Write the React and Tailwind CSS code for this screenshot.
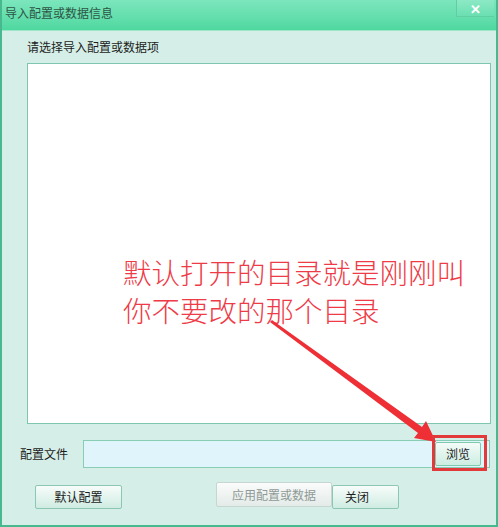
export default function App() {
  const font = { fontFamily: '"Noto Sans CJK SC", "Noto Sans", sans-serif' };
  return (
    <div
      className="relative w-[498px] h-[527px] overflow-hidden bg-[#d5efe8] border-l-2 border-r-2 border-b-2 border-[#48b88e] text-[12px] text-[#1d1d1d]"
      style={font}
    >
      {/* title bar */}
      <div className="flex h-[31px] items-start justify-between bg-gradient-to-b from-[#7ce6bd] to-[#4ed8a0] border-b border-[#9fe6c9]">
        <span className="pl-[3px] pt-[5px] leading-[16px] text-[#2e5546]">导入配置或数据信息</span>
        <div className="mr-[2px] flex h-[17px] w-[38px] items-center justify-center border-l border-b border-[#5fcfa2] bg-gradient-to-b from-[#8ce9c5] to-[#6adfb1] text-[13px] font-bold leading-none text-white">
          ✕
        </div>
      </div>

      <div className="flex flex-col px-[25px] pt-[8px]">
        <span className="leading-[16px]">请选择导入配置或数据项</span>
        <div className="mt-[8px] h-[361px] w-[464px] shrink-0 border border-[#7ec7ae] bg-white"></div>

        <div className="mt-[16px] -ml-[7px] flex items-center">
          <span className="w-[63px] shrink-0">配置文件</span>
          <div className="flex h-[28px] w-[407px] shrink-0 items-center justify-end border border-[#86cdb4] bg-[#e0f4fb] pr-[8px]">
            <button className="h-[24px] w-[46px] rounded-[2px] border border-[#7fcaae] bg-gradient-to-b from-[#f4fbf8] to-[#cdeee2] text-[12px]">
              浏览
            </button>
          </div>
        </div>

        <div className="mt-[14px] flex items-start">
          <button className="ml-[8px] mt-[3px] h-[24px] w-[87px] shrink-0 rounded-[2px] border border-[#8bc7b2] bg-gradient-to-b from-[#f7fcfa] to-[#cfece2] text-[12px]">
            默认配置
          </button>
          <button className="ml-[94px] h-[25px] w-[116px] shrink-0 rounded-[2px] border border-[#c6d6d0] bg-gradient-to-b from-[#fbfbfb] to-[#e3ebe8] text-[12px] text-[#8f9a96]">
            应用配置或数据
          </button>
          <button className="mt-[3px] h-[24px] w-[67px] shrink-0 rounded-[2px] border border-[#8bc7b2] bg-gradient-to-b from-[#f7fcfa] to-[#cfece2] text-left text-[12px]">
            <span className="pl-[12px]">关闭</span>
          </button>
        </div>
      </div>

      {/* annotation overlay */}
      <div
        className="absolute left-[121px] top-[253px] text-[28.5px] leading-[38px] text-[#ee3b47]"
        style={{ fontFamily: '"Noto Sans CJK SC", sans-serif', fontWeight: 300 }}
      >
        <div>默认打开的目录就是刚刚叫</div>
        <div>你不要改的那个目录</div>
      </div>
      <svg className="absolute left-0 top-0" width="498" height="527" viewBox="0 0 498 527">
        <polygon points="268,322 270,320 420,427 424,421 434,442 412,438 416,433" fill="#ee3036" />
      </svg>
      <div className="absolute left-[430px] top-[435px] h-[36px] w-[55px] border-[3px] border-[#e23a3a]"></div>
    </div>
  );
}
